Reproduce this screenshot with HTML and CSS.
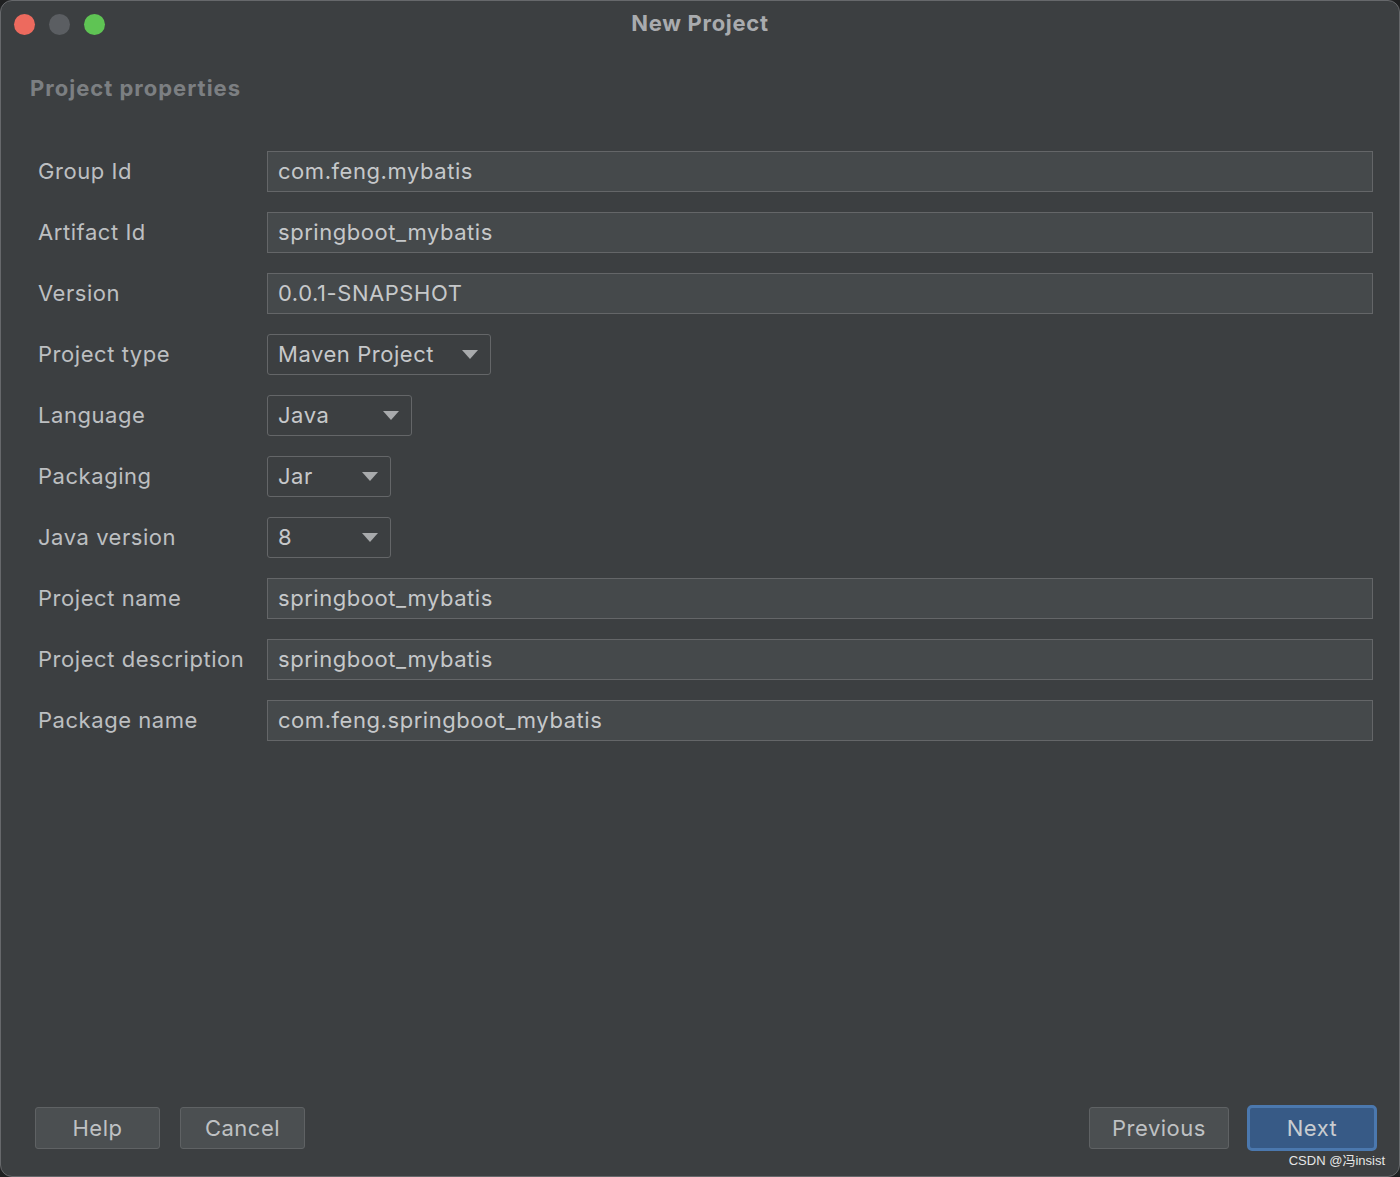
FILE: index.html
```html
<!DOCTYPE html>
<html>
<head>
<meta charset="utf-8">
<link rel="stylesheet" href="styles.css">
</head>
<body>
<div class="window">
  <div class="titlebar">
    <div class="lights">
      <span class="light red"></span>
      <span class="light gray"></span>
      <span class="light green"></span>
    </div>
    <div class="title">New Project</div>
  </div>
  <div class="content">
    <div class="heading">Project properties</div>
    <div class="form">
      <div class="label">Group Id</div>
      <div class="field">com.feng.mybatis</div>
      <div class="label">Artifact Id</div>
      <div class="field">springboot_mybatis</div>
      <div class="label">Version</div>
      <div class="field">0.0.1-SNAPSHOT</div>
      <div class="label">Project type</div>
      <div><div class="combo w224"><span>Maven Project</span><span class="arrow"></span></div></div>
      <div class="label">Language</div>
      <div><div class="combo w145"><span>Java</span><span class="arrow"></span></div></div>
      <div class="label">Packaging</div>
      <div><div class="combo w124"><span>Jar</span><span class="arrow"></span></div></div>
      <div class="label">Java version</div>
      <div><div class="combo w124"><span>8</span><span class="arrow"></span></div></div>
      <div class="label">Project name</div>
      <div class="field">springboot_mybatis</div>
      <div class="label">Project description</div>
      <div class="field">springboot_mybatis</div>
      <div class="label">Package name</div>
      <div class="field">com.feng.springboot_mybatis</div>
    </div>
  </div>
  <div class="footer">
    <div class="group">
      <button class="btn w125">Help</button>
      <button class="btn w125">Cancel</button>
    </div>
    <div class="group">
      <button class="btn w140">Previous</button>
      <button class="btn primary">Next</button>
    </div>
  </div>
  <div class="watermark">CSDN @冯insist</div>
</div>
</body>
</html>
```
FILE: styles.css
```css
* { box-sizing: border-box; }
html, body { margin: 0; padding: 0; }
body {
  width: 1400px;
  height: 1177px;
  background: #1f2021;
  font-family: "Inter", "Liberation Sans", "Noto Sans CJK SC", sans-serif;
  overflow: hidden;
}
.window {
  position: relative;
  width: 1400px;
  height: 1177px;
  background: #3c3f41;
  border: 1px solid #66686b;
  border-radius: 12px;
  display: flex;
  flex-direction: column;
  overflow: hidden;
}
.titlebar {
  position: relative;
  height: 47px;
  display: flex;
  align-items: center;
  justify-content: center;
}
.lights {
  position: absolute;
  left: 13px;
  top: 13px;
  display: flex;
  gap: 14px;
}
.light {
  width: 21px;
  height: 21px;
  border-radius: 50%;
  display: block;
}
.red { background: #ed6a5e; }
.gray { background: #5b5e62; }
.green { background: #5fc454; }
.title {
  color: #a9abae;
  font-size: 22px;
  font-weight: 700;
  letter-spacing: 0.7px;
  margin-top: -3px;
}
.content {
  flex: 1;
  padding: 26px 26px 0 29px;
}
.heading {
  color: #7c7f82;
  font-size: 22px;
  font-weight: 700;
  letter-spacing: 1px;
  line-height: 28px;
}
.form {
  margin-top: 49px;
  padding-left: 8px;
  display: grid;
  grid-template-columns: 229px 1fr;
  row-gap: 20px;
  align-items: center;
  letter-spacing: 0.55px;
}
.label {
  color: #bdbfc1;
  font-size: 22px;
  margin-top: -1px;
}
.field, .combo {
  height: 41px;
  background: #45494b;
  border: 1px solid #646668;
  color: #c6c8ca;
  font-size: 22px;
  padding: 0 10px 2px;
  display: flex;
  align-items: center;
}
.combo {
  background: #3c3f41;
  border-radius: 3px;
  justify-content: space-between;
  padding-right: 12px;
}
.w224 { width: 224px; }
.w145 { width: 145px; }
.w124 { width: 124px; }
.arrow {
  width: 0;
  height: 0;
  margin-top: 2px;
  border-left: 8px solid transparent;
  border-right: 8px solid transparent;
  border-top: 9px solid #a8aaac;
}
.footer {
  height: 70px;
  padding: 0 22px 27px 34px;
  display: flex;
  justify-content: space-between;
  align-items: flex-end;
}
.group {
  display: flex;
  gap: 20px;
  align-items: center;
}
.btn {
  height: 42px;
  background: #4b4f51;
  border: 1px solid #5f6264;
  border-radius: 3px;
  color: #bfc1c3;
  font-family: "Inter", "Liberation Sans", sans-serif;
  font-size: 22px;
  letter-spacing: 0.5px;
  padding: 0;
}
.w125 { width: 125px; }
.w140 { width: 140px; }
.primary {
  width: 130px;
  height: 46px;
  margin: -2px 0 -2px -2px;
  background: #375a86;
  border: 3px solid #4b78ae;
  border-radius: 5px;
  color: #c9ccd0;
}
.watermark {
  position: absolute;
  right: 14px;
  bottom: 7px;
  color: #e6e6e6;
  font-size: 13px;
  font-family: "Liberation Sans", "Noto Sans CJK SC", sans-serif;
}
```
